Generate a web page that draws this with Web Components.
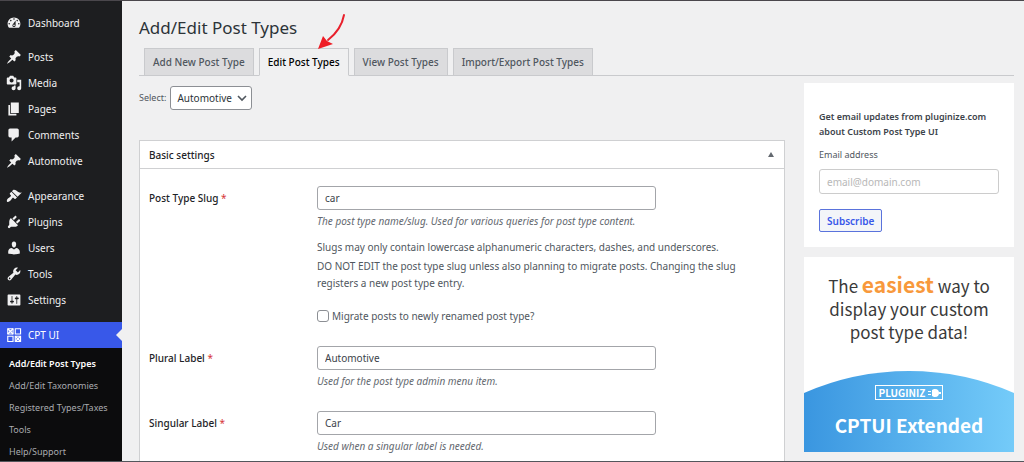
<!DOCTYPE html>
<html lang="en">
<head>
<meta charset="utf-8">
<title>Add/Edit Post Types</title>
<style>
  html, body { margin: 0; height: 100%; }
  body { font: 10px/16px "Noto Sans", "Open Sans", sans-serif; color: #50575e; background: #f0f0f1; overflow: hidden; }
</style>
</head>
<body>
<admin-shell>
  <admin-menu slot="menu">
    <menu-item icon="dashboard">Dashboard</menu-item>
    <menu-item icon="post" group>Posts</menu-item>
    <menu-item icon="media">Media</menu-item>
    <menu-item icon="page">Pages</menu-item>
    <menu-item icon="comment">Comments</menu-item>
    <menu-item icon="post">Automotive</menu-item>
    <menu-item icon="brush" group>Appearance</menu-item>
    <menu-item icon="plugin">Plugins</menu-item>
    <menu-item icon="user">Users</menu-item>
    <menu-item icon="tool">Tools</menu-item>
    <menu-item icon="settings">Settings</menu-item>
    <menu-item icon="cptui" group current>CPT UI</menu-item>
    <sub-menu>
      <sub-item current>Add/Edit Post Types</sub-item>
      <sub-item>Add/Edit Taxonomies</sub-item>
      <sub-item>Registered Types/Taxes</sub-item>
      <sub-item>Tools</sub-item>
      <sub-item>Help/Support</sub-item>
    </sub-menu>
  </admin-menu>
  <page-title>Add/Edit Post Types</page-title>
  <tab-bar>
    <nav-tab>Add New Post Type</nav-tab>
    <nav-tab active>Edit Post Types</nav-tab>
    <nav-tab>View Post Types</nav-tab>
    <nav-tab>Import/Export Post Types</nav-tab>
  </tab-bar>
  <page-columns>
    <type-picker></type-picker>
    <settings-panel heading="Basic settings">
      <text-field label="Post Type Slug" value="car" hint="The post type name/slug. Used for various queries for post type content.">
        <slug-notes></slug-notes>
      </text-field>
      <text-field label="Plural Label" value="Automotive" hint="Used for the post type admin menu item."></text-field>
      <text-field label="Singular Label" value="Car" hint="Used when a singular label is needed."></text-field>
    </settings-panel>
    <newsletter-card slot="aside"></newsletter-card>
    <promo-card slot="aside"></promo-card>
  </page-columns>
</admin-shell>

<script>
const ICONS = {
  dashboard: '<path d="M3.76 16h12.48c1.1-1.37 1.76-3.11 1.76-5 0-4.42-3.58-8-8-8s-8 3.58-8 8c0 1.89.66 3.63 1.76 5zM10 4c.55 0 1 .45 1 1s-.45 1-1 1-1-.45-1-1 .45-1 1-1zM6 6c.55 0 1 .45 1 1s-.45 1-1 1-1-.45-1-1 .45-1 1-1zm8 0c.55 0 1 .45 1 1s-.45 1-1 1-1-.45-1-1 .45-1 1-1zm-5.37 5.55L12 7v6c0 1.1-.9 2-2 2s-2-.9-2-2c0-.57.24-1.08.63-1.45zM4 10c.55 0 1 .45 1 1s-.45 1-1 1-1-.45-1-1 .45-1 1-1zm12 0c.55 0 1 .45 1 1s-.45 1-1 1-1-.45-1-1 .45-1 1-1zm-5 3c0-.55-.45-1-1-1s-1 .45-1 1 .45 1 1 1 1-.45 1-1z"/>',
  post: '<path d="M10.44 3.02l1.82-1.82 6.36 6.35-1.83 1.82c-1.05-.68-2.48-.57-3.41.36l-.75.75c-.92.93-1.04 2.35-.35 3.41l-1.83 1.82-2.41-2.41-2.8 2.79c-.42.42-3.38 2.71-3.8 2.29s1.86-3.39 2.28-3.81l2.79-2.79L4.1 9.36l1.83-1.82c1.05.69 2.48.57 3.4-.36l.75-.75c.93-.92 1.05-2.35.36-3.41z"/>',
  media: '<path d="M13 11V4c0-.55-.45-1-1-1h-1.67L9 1H5L3.67 3H2c-.55 0-1 .45-1 1v7c0 .55.45 1 1 1h10c.55 0 1-.45 1-1zM7 4.5c1.38 0 2.5 1.12 2.5 2.5S8.38 9.5 7 9.5 4.5 8.38 4.5 7 5.62 4.5 7 4.5zM14 6h5v10.5c0 1.38-1.12 2.5-2.5 2.5S14 17.88 14 16.5s1.12-2.5 2.5-2.5c.17 0 .34.02.5.05V9h-3V6zm-4 8.05V13h2v3.5c0 1.38-1.12 2.5-2.5 2.5S7 17.88 7 16.5 8.12 14 9.5 14c.17 0 .34.02.5.05z"/>',
  page: '<path d="M6 15V2h10v13H6zm-1 1h8v2H3V5h2v11z"/>',
  comment: '<path d="M5 2h9c1.1 0 2 .9 2 2v7c0 1.1-.9 2-2 2h-2l-5 5v-5H5c-1.1 0-2-.9-2-2V4c0-1.1.9-2 2-2z"/>',
  brush: '<path d="M14.48 11.06L7.41 3.99l1.5-1.5c.5-.56 2.3-.47 3.51.32 1.21.8 1.43 1.28 2.91 2.1 1.18.64 2.45 1.26 4.45.85zm-.71.71L6.7 4.7 4.93 6.47c-.39.39-.39 1.02 0 1.41l1.06 1.06c.39.39.39 1.03 0 1.42-.6.6-1.43 1.11-2.21 1.69-.35.26-.7.53-1.01.84C1.43 14.23.4 16.08 1.4 17.07c.99 1 2.84-.03 4.18-1.36.31-.31.58-.66.85-1.02.57-.78 1.08-1.61 1.69-2.21.39-.39 1.02-.39 1.41 0l1.06 1.06c.39.39 1.02.39 1.41 0z"/>',
  plugin: '<path d="M13.11 4.36L9.87 7.6 8 5.73l3.24-3.24c.35-.34 1.05-.2 1.56.32.52.51.66 1.21.31 1.55zm-8 1.77l.91-1.12 9.01 9.01-1.19.84c-.71.71-2.63 1.16-3.82 1.16H6.14L4.9 17.26c-.59.59-1.54.59-2.12 0-.59-.58-.59-1.53 0-2.12l1.24-1.24v-3.88c0-1.13.4-3.19 1.09-3.89zm7.26 3.97l3.24-3.24c.34-.35 1.04-.21 1.55.31.52.51.66 1.21.31 1.55l-3.24 3.25z"/>',
  user: '<path d="M10 9.25c-2.27 0-2.73-3.44-2.73-3.44C7 4.02 7.82 2 9.97 2c2.16 0 2.98 2.02 2.71 3.81 0 0-.41 3.44-2.68 3.44zm0 2.57L12.72 10c2.39 0 4.52 2.33 4.52 4.53v2.49s-3.65 1.13-7.24 1.13c-3.65 0-7.24-1.13-7.24-1.13v-2.49c0-2.25 1.94-4.48 4.47-4.48z"/>',
  tool: '<path d="M16.68 9.77c-1.34 1.34-3.3 1.67-4.95.99l-5.41 6.52c-.99.99-2.59.99-3.58 0s-.99-2.59 0-3.57l6.52-5.42c-.68-1.65-.35-3.61.99-4.95 1.28-1.28 3.12-1.62 4.72-1.06l-2.89 2.89 2.82 2.82 2.86-2.87c.53 1.58.18 3.39-1.08 4.65zM3.81 16.21c.4.39 1.04.39 1.43 0 .4-.4.4-1.04 0-1.43-.39-.4-1.03-.4-1.43 0-.39.39-.39 1.03 0 1.43z"/>',
  settings: '<path d="M18 16V4c0-.55-.45-1-1-1H3c-.55 0-1 .45-1 1v12c0 .55.45 1 1 1h14c.55 0 1-.45 1-1zM8 11h1c.55 0 1 .45 1 1s-.45 1-1 1H8v1.5c0 .28-.22.5-.5.5s-.5-.22-.5-.5V13H6c-.55 0-1-.45-1-1s.45-1 1-1h1V5.5c0-.28.22-.5.5-.5s.5.22.5.5V11zm5-2h-1c-.55 0-1-.45-1-1s.45-1 1-1h1V5.5c0-.28.22-.5.5-.5s.5.22.5.5V7h1c.55 0 1 .45 1 1s-.45 1-1 1h-1v5.5c0 .28-.22.5-.5.5s-.5-.22-.5-.5V9z"/>',
  cptui: '<g fill="none" stroke="currentColor" stroke-width="1.4"><path d="M2.2 2.2h6.6v6.6H2.2zM11.6 2.2h6.6v6.6h-6.6zM2.2 11.6h6.6v6.6H2.2zM11.6 11.6h6.6v6.6h-6.6z"/><path stroke-width="1.8" d="M2.2 2.2l6.6 6.6M8.8 2.2L2.2 8.8M11.6 11.6l6.6 6.6M18.2 11.6l-6.6 6.6"/></g>'
};

/* Registers an element whose shadow root is filled from the given markup. */
function define(name, css, markup) {
  customElements.define(name, class extends HTMLElement {
    constructor() {
      super();
      this.attachShadow({ mode: 'open' });
    }
    connectedCallback() {
      const html = typeof markup === 'function' ? markup(this) : markup;
      this.shadowRoot.innerHTML = `<style>*{box-sizing:border-box}${css}</style>${html}`;
    }
  });
}

define('admin-shell', `
  :host { display: grid; grid-template-columns: 122px 1fr; height: 100vh; box-sizing: border-box;
          border-top: 1px solid #4a474c; border-bottom: 1px solid #53565c; overflow: hidden; }
  main { min-width: 0; padding: 14px 10px 0 17px; }`,
  '<slot name="menu"></slot><main><slot></slot></main>');

define('admin-menu', `
  :host { display: block; background: #1d1e20; color: #f0f0f1; }
  nav { display: flex; flex-direction: column; padding-top: 9px; }`,
  '<nav aria-label="Admin"><slot></slot></nav>');

define('menu-item', `
  :host { display: block; }
  :host([group]) { margin-top: 8px; }
  :host([group]:not([icon="post"])) { margin-top: 9px; }
  a { position: relative; display: flex; align-items: center; gap: 6px; height: 26px; padding-left: 6px; color: inherit; text-decoration: none; }
  svg { width: 16px; height: 16px; fill: currentColor; }
  :host([current]) a { background: #3858e9; color: #fff; }
  :host([current]) a::after { content: ""; position: absolute; right: 0; top: 7px; border: 6px solid transparent; border-left: 0; border-right-color: #f0f0f1; }`,
  el => `<a href="#"><svg viewBox="0 0 20 20" aria-hidden="true">${ICONS[el.getAttribute('icon')]}</svg><slot></slot></a>`);

define('sub-menu', `
  :host { display: flex; flex-direction: column; padding: 5px 0 12px; background: #0c0c0d; color: #a9abaf; font-size: 9px; }`,
  '<slot></slot>');

define('sub-item', `
  :host { display: block; }
  a { display: block; padding-left: 9px; line-height: 22px; color: inherit; text-decoration: none; white-space: nowrap; }
  :host([current]) a { color: #fff; font-weight: 600; }`,
  '<a href="#"><slot></slot></a>');

define('page-title', `
  :host { display: block; }
  h1 { margin: 0; font-size: 17px; font-weight: 400; line-height: 26px; color: #2c3338; }`,
  '<h1><slot></slot></h1>');

define('tab-bar', `
  :host { position: relative; display: block; margin-top: 7px; }
  nav { display: flex; gap: 5px; padding-left: 5px; border-bottom: 1px solid #c9cacd; }
  svg { position: absolute; left: 177px; top: -35px; width: 34px; height: 38px; }`,
  `<nav aria-label="Post type actions"><slot></slot></nav>
   <svg viewBox="0 0 34 38" aria-hidden="true"><path d="M28 2C26 13 21 20 12 27" fill="none" stroke="#e8202c" stroke-width="2" stroke-linecap="round"/><path d="M2 36L7 23l4 5 6 3z" fill="#ee1c25"/></svg>`);

define('nav-tab', `
  :host { display: block; margin-bottom: -1px; }
  a { display: block; padding: 0 8px; border: 1px solid #c9cacd; background: #dcdcde; color: #50575e;
      font-weight: 500; line-height: 26px; text-decoration: none; white-space: nowrap; }
  :host([active]) a { background: #f0f0f1; border-bottom-color: #f0f0f1; color: #000; }`,
  '<a href="#"><slot></slot></a>');

define('page-columns', `
  :host { display: grid; grid-template-columns: minmax(0, 1fr) 210px; gap: 19px; }
  div { padding-top: 10px; }
  aside { display: flex; flex-direction: column; gap: 10px; padding-top: 7px; }`,
  '<div><slot></slot></div><aside><slot name="aside"></slot></aside>');

define('type-picker', `
  :host { display: flex; align-items: center; gap: 4px; margin-bottom: 30px; }
  label { font-size: 9px; }
  span { display: inline-grid; align-items: center; }
  select, svg { grid-area: 1 / 1; }
  select { width: 82px; height: 24px; padding: 0 18px 0 6px; appearance: none; border: 1px solid #8c8f94; border-radius: 3px;
           background: #fff; color: #2c3338; font: inherit; }
  svg { justify-self: end; width: 10px; height: 10px; margin-right: 5px; pointer-events: none; }`,
  `<label for="type">Select:</label>
   <span><select id="type"><option>Automotive</option></select>
   <svg viewBox="0 0 10 10" aria-hidden="true"><path d="M1 3l4 4 4-4" fill="none" stroke="#50575e" stroke-width="1.6"/></svg></span>`);

define('settings-panel', `
  :host { display: block; background: #fff; border: 1px solid #cfd0d2; }
  header { display: flex; align-items: center; justify-content: space-between; height: 28px; padding-left: 9px; border-bottom: 1px solid #cfd0d2; }
  h2 { margin: 0; font-size: 10px; font-weight: 500; color: #1d2327; }
  button { display: flex; padding: 8px 10px; border: 0; background: none; }
  svg { width: 6px; height: 5px; fill: #646970; }
  form { display: flex; flex-direction: column; gap: 22px; padding: 17px 9px; }`,
  el => `<header><h2>${el.getAttribute('heading')}</h2>
   <button type="button" aria-label="Toggle panel"><svg viewBox="0 0 6 5"><path d="M3 0L6 5H0z"/></svg></button></header>
   <form><slot></slot></form>`);

define('text-field', `
  :host { display: grid; grid-template-columns: 168px minmax(0, 1fr); }
  label { color: #1d2327; font-weight: 500; line-height: 24px; }
  b { color: #d63638; font-weight: 400; }
  input { display: block; width: 100%; max-width: 339px; height: 24px; padding: 0 7px; border: 1px solid #a3a5a9; border-radius: 3px;
          background: #fff; color: #3c434a; font: inherit; }
  p { margin: 3px 0 0; font-style: italic; color: #646970; }`,
  el => `<label for="f">${el.getAttribute('label')} <b>*</b></label>
   <div><input id="f" type="text" value="${el.getAttribute('value')}"><p>${el.getAttribute('hint')}</p><slot></slot></div>`);

define('slug-notes', `
  :host { display: block; padding-top: 10px; }
  p { margin: 0 0 2px; max-width: 430px; line-height: 17px; }
  label { display: flex; align-items: center; gap: 3px; margin-top: 16px; }
  input { appearance: none; width: 12px; height: 12px; margin: 0; border: 1px solid #8c8f94; border-radius: 3px; background: #fff; }`,
  `<p>Slugs may only contain lowercase alphanumeric characters, dashes, and underscores.</p>
   <p>DO NOT EDIT the post type slug unless also planning to migrate posts. Changing the slug registers a new post type entry.</p>
   <label><input type="checkbox">Migrate posts to newly renamed post type?</label>`);

define('newsletter-card', `
  :host { display: block; padding: 26px 15px 15px; background: #fff; }
  form { display: flex; flex-direction: column; align-items: flex-start; }
  p { margin: 0; font-size: 9px; font-weight: 600; line-height: 15px; color: #3c434a; }
  label { margin-top: 8px; font-size: 9px; }
  input { width: 100%; height: 25px; margin: 6px 0 15px; padding: 0 7px; border: 1px solid #ccc; border-radius: 3px; font: inherit; }
  input::placeholder { color: #b8b8b8; }
  button { height: 23px; padding: 0 7px; border: 1px solid #5a73dc; border-radius: 2px; background: #f3f5f9; color: #3858e9;
           font: inherit; font-weight: 600; }`,
  `<form><p>Get email updates from pluginize.com about Custom Post Type UI</p>
   <label for="email">Email address</label><input id="email" type="email" placeholder="email@domain.com">
   <button type="button">Subscribe</button></form>`);

define('promo-card', `
  :host { display: block; background: #fff; font-family: "Noto Sans CJK SC", "Open Sans", sans-serif; text-align: center; }
  a { display: flex; flex-direction: column; color: #3a3a3a; text-decoration: none; }
  p { margin: 0; padding: 16px 14px 0; font-size: 17px; line-height: 23px; }
  strong { color: #f8993c; font-size: 21px; line-height: 22px; }
  .foot { display: grid; margin-top: 28px; }
  .hill, .copy { grid-area: 1 / 1; }
  .hill { width: 100%; height: 81px; }
  .copy { display: flex; flex-direction: column; align-items: center; padding-top: 14px; color: #fff; }
  .brand { display: flex; align-items: center; gap: 3px; height: 15px; padding: 0 1px 0 3px; border: 1px solid #fff; font-size: 10px; font-weight: 700; }
  .brand svg { width: 13px; height: 10px; }
  .name { margin-top: 12px; font-size: 19px; font-weight: 700; line-height: 26px; }`,
  `<a href="#"><p>The <strong>easiest</strong> way to<br>display your custom<br>post type data!</p>
   <div class="foot">
     <svg class="hill" viewBox="0 0 210 81" preserveAspectRatio="none" aria-hidden="true">
       <defs><linearGradient id="g"><stop stop-color="#3a96e0"/><stop offset="1" stop-color="#74cbf9"/></linearGradient></defs>
       <path d="M0 22Q50 0 105 0t105 22v59H0z" fill="url(#g)"/></svg>
     <div class="copy"><span class="brand">PLUGINIZ<svg viewBox="0 0 13 10" aria-hidden="true"><path d="M4 2l2-1h1c3 0 4 2 4 4s-1 4-4 4H6L4 8zM0 3h3v1H0zM0 6h3v1H0zM11 4h2v2h-2z" fill="#fff"/></svg></span>
     <span class="name">CPTUI Extended</span></div>
   </div></a>`);
</script>
</body>
</html>
